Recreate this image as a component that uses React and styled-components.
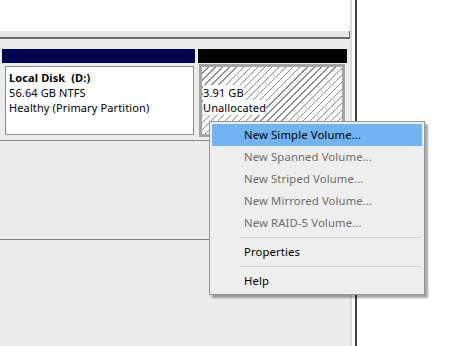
import React from "react";
import styled, { createGlobalStyle } from "styled-components";

const GlobalStyle = createGlobalStyle`
  html, body {
    margin: 0;
    padding: 0;
    background: #ffffff;
  }
  body {
    font-family: "Noto Sans", "Open Sans", sans-serif;
    font-size: 11px;
    letter-spacing: 0.12px;
    color: #000;
  }
`;

const Frame = styled.div`
  position: relative;
  display: flex;
  width: 453px;
  height: 346px;
  overflow: hidden;
`;

const MainPane = styled.div`
  width: 350px;
  display: flex;
  flex-direction: column;
  border-right: 2px solid #d9d9d9;
`;

const EdgeStrip = styled.div`
  width: 3px;
  background: #ffffff;
  border-right: 2px solid #444444;
`;

const TopList = styled.div`
  height: 31px;
  background: #ffffff;
`;

const Splitter = styled.div`
  height: 6px;
  background: #e6e6e6;
  border-bottom: 2px solid #6b6b6b;
  border-right: 1px solid #6b6b6b;
`;

const DiskArea = styled.div`
  background: #ececec;
  padding: 10px 0 0 2px;
  height: 91px;
  border-bottom: 1px solid #8a8a8a;
`;

const DiskRow = styled.div`
  display: flex;
  gap: 3px;
`;

const Partition = styled.div`
  width: ${(p) => p.width}px;
  display: flex;
  flex-direction: column;
`;

const PartHeader = styled.div`
  height: 14px;
  background: ${(p) => p.color};
`;

const PartBody = styled.div`
  box-sizing: border-box;
  margin-top: ${(p) => (p.hatched ? 1 : 3)}px;
  margin-left: ${(p) => (p.hatched ? 1 : 3)}px;
  margin-right: ${(p) => (p.hatched ? 2 : 1)}px;
  height: ${(p) => (p.hatched ? 73 : 69)}px;
  border: ${(p) => (p.hatched ? "3px solid #a3a3a3" : "1px solid #8c8c8c")};
  background: ${(p) =>
    p.hatched
      ? "repeating-linear-gradient(135deg, #ffffff 0 4px, #8a8a8a 4px 5px)"
      : "#ffffff"};
  padding: ${(p) => (p.hatched ? "18px 0 0 1px" : "3px 0 0 3px")};
  display: flex;
  flex-direction: column;
  align-items: flex-start;
  line-height: 15px;
`;

const PartLine = styled.span`
  font-weight: ${(p) => (p.bold ? 700 : 400)};
  white-space: pre;
  background: ${(p) => (p.backed ? "#ffffff" : "transparent")};
`;

const EmptyArea = styled.div`
  flex: 0 0 98px;
  background: #ececec;
  border-bottom: 1px solid #808080;
`;

const LowerArea = styled.div`
  flex: 1;
  background: #ececec;
`;

const Menu = styled.div`
  position: absolute;
  left: 209px;
  top: 121px;
  width: 210px;
  padding: 2px;
  background: #eeeeee;
  border: 1px solid #979797;
  box-shadow: 3px 3px 2px rgba(0, 0, 0, 0.35);
`;

const MenuItem = styled.div`
  height: 22px;
  line-height: 22px;
  padding-left: 32px;
  font-size: 11.3px;
  white-space: nowrap;
  color: ${(p) => (p.disabled ? "#6d6d6d" : "#000000")};
  background: ${(p) => (p.active ? "#70b4f4" : "transparent")};
`;

const Separator = styled.div`
  height: 7px;
  display: flex;
  align-items: center;
  padding-left: 28px;
  &::after {
    content: "";
    flex: 1;
    height: 1px;
    background: #d2d2d2;
  }
`;

const items = [
  { label: "New Simple Volume...", active: true },
  { label: "New Spanned Volume...", disabled: true },
  { label: "New Striped Volume...", disabled: true },
  { label: "New Mirrored Volume...", disabled: true },
  { label: "New RAID-5 Volume...", disabled: true },
  { sep: true },
  { label: "Properties" },
  { sep: true },
  { label: "Help" },
];

export default function App() {
  return (
    <>
      <GlobalStyle />
      <Frame>
        <MainPane>
          <TopList />
          <Splitter />
          <DiskArea>
            <DiskRow>
              <Partition width={193}>
                <PartHeader color="#00004f" />
                <PartBody>
                  <PartLine bold>{"Local Disk  (D:)"}</PartLine>
                  <PartLine>56.64 GB NTFS</PartLine>
                  <PartLine>Healthy (Primary Partition)</PartLine>
                </PartBody>
              </Partition>
              <Partition width={149}>
                <PartHeader color="#000000" />
                <PartBody hatched>
                  <PartLine backed>3.91 GB</PartLine>
                  <PartLine backed>Unallocated</PartLine>
                </PartBody>
              </Partition>
            </DiskRow>
          </DiskArea>
          <EmptyArea />
          <LowerArea />
        </MainPane>
        <EdgeStrip />
        <Menu>
          {items.map((it, i) =>
            it.sep ? (
              <Separator key={i} />
            ) : (
              <MenuItem key={i} active={it.active} disabled={it.disabled}>
                {it.label}
              </MenuItem>
            )
          )}
        </Menu>
      </Frame>
    </>
  );
}
